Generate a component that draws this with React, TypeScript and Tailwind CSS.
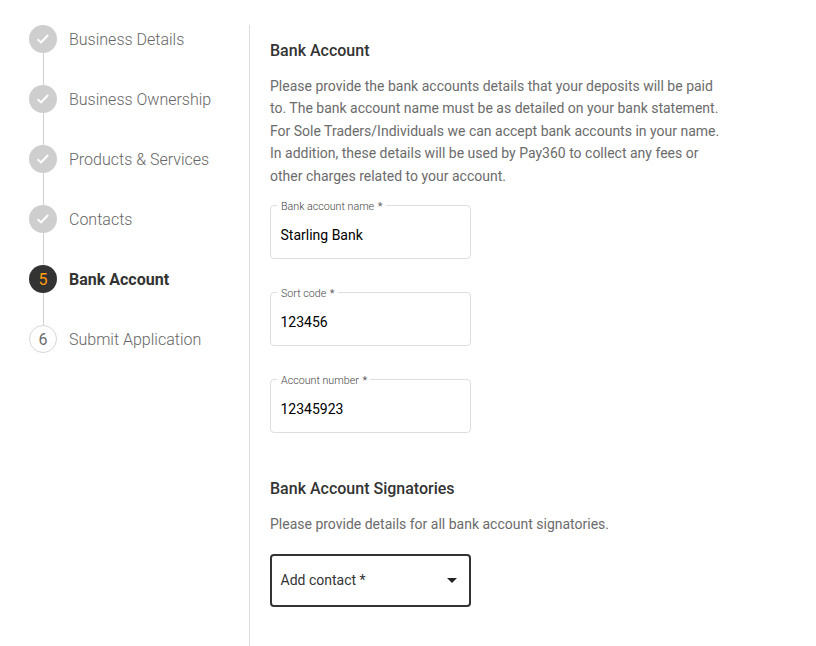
import React from "react";

const steps = ["Business Details", "Business Ownership", "Products & Services", "Contacts", "Bank Account", "Submit Application"];

function Step({ label, index }: { label: string; index: number }) {
  const done = index < 4;
  const active = index === 4;
  return (
    <li>
      <div className="flex h-7 items-center gap-3">
        <span
          className={
            "flex size-7 shrink-0 items-center justify-center rounded-full text-base " +
            (done ? "bg-[#cecece]" : active ? "bg-[#333] pt-px text-[#ff9e0f]" : "border border-[#d6d6d6] pt-px text-[#6b6b6b]")
          }
        >
          {done ? (
            <svg width="14" height="12" viewBox="0 0 14 12" fill="none" stroke="#fff" strokeWidth="1.9">
              <path d="M1.6 6.3L5 9.4L12.2 2" />
            </svg>
          ) : (
            index + 1
          )}
        </span>
        <span className={"pt-0.5 text-base whitespace-nowrap " + (active ? "font-bold text-[#333]" : "font-light text-[#666]")}>{label}</span>
      </div>
      {index < 5 && <div className="ml-[14px] h-8 w-px bg-[#d0d0d0]" />}
    </li>
  );
}

function Field({ label, value }: { label: string; value: string }) {
  return (
    <fieldset className="h-[60px] w-[201px] rounded border border-[#dedede] px-[10px]">
      <legend className="-ml-1 h-3 pr-[3px] pl-1 text-[10.7px] leading-4 font-light text-[#444]">
        {label} <span className="ml-px text-[11px] font-normal text-[#666]">*</span>
      </legend>
      <div className="-ml-[0.5px] pt-[14px] text-sm leading-5 text-black">{value}</div>
    </fieldset>
  );
}

export default function App() {
  return (
    <div className="flex h-[646px] w-[816px] overflow-hidden bg-white font-['Roboto',sans-serif]">
      <aside className="w-[249px] shrink-0 pt-[25px] pl-[29px]">
        <ol>
          {steps.map((s, i) => (
            <Step key={s} label={s} index={i} />
          ))}
        </ol>
      </aside>
      <main className="mt-[25px] border-l border-[#dedede] pl-5">
        <h2 className="mt-[14px] text-base leading-6 font-medium text-[#333]">Bank Account</h2>
        <p className="mt-3 w-[455px] text-sm leading-[22.4px] text-[#6b6b6b]">
          Please provide the bank accounts details that your deposits will be paid<br />
          to. The bank account name must be as detailed on your bank statement.<br />
          For Sole Traders/Individuals we can accept bank accounts in your name.<br />
          In addition, these details will be used by Pay360 to collect any fees or<br />
          other charges related to your account.
        </p>
        <div className="mt-[12px] flex flex-col gap-[27px]">
          <Field label="Bank account name" value="Starling Bank" />
          <Field label="Sort code" value="123456" />
          <Field label="Account number" value="12345923" />
        </div>
        <h2 className="mt-[44px] text-base leading-6 font-medium text-[#333]">Bank Account Signatories</h2>
        <p className="mt-3 text-sm leading-[22px] text-[#6b6b6b]">Please provide details for all bank account signatories.</p>
        <button className="mt-[19px] flex h-[53px] w-[201px] items-center justify-between rounded border-2 border-[#333] pr-[12px] pl-[8.5px] text-sm text-[#333]">
          <span className="pb-0.5">Add contact *</span>
          <svg width="10" height="5" viewBox="0 0 10 5">
            <path d="M0 0h10L5 5z" fill="#222" />
          </svg>
        </button>
      </main>
    </div>
  );
}
